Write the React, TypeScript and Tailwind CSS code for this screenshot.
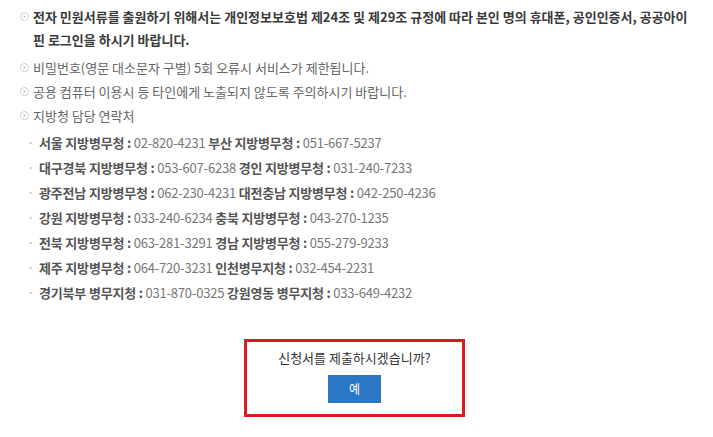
import React from 'react';

// 안내 문구 + 지방청 연락처 + 제출 확인 박스
const notices: { text: string; strong?: boolean }[] = [
  {
    text: '전자 민원서류를 출원하기 위해서는 개인정보보호법 제24조 및 제29조 규정에 따라 본인 명의 휴대폰, 공인인증서, 공공아이핀 로그인을 하시기 바랍니다.',
    strong: true,
  },
  { text: '비밀번호(영문 대소문자 구별) 5회 오류시 서비스가 제한됩니다.' },
  { text: '공용 컴퓨터 이용시 등 타인에게 노출되지 않도록 주의하시기 바랍니다.' },
];

const contacts: [string, string][][] = [
  [['서울 지방병무청', '02-820-4231'], ['부산 지방병무청', '051-667-5237']],
  [['대구경북 지방병무청', '053-607-6238'], ['경인 지방병무청', '031-240-7233']],
  [['광주전남 지방병무청', '062-230-4231'], ['대전충남 지방병무청', '042-250-4236']],
  [['강원 지방병무청', '033-240-6234'], ['충북 지방병무청', '043-270-1235']],
  [['전북 지방병무청', '063-281-3291'], ['경남 지방병무청', '055-279-9233']],
  [['제주 지방병무청', '064-720-3231'], ['인천병무지청', '032-454-2231']],
  [['경기북부 병무지청', '031-870-0325'], ['강원영동 병무지청', '033-649-4232']],
];

function CircleArrow() {
  return (
    <svg width="9" height="9" viewBox="0 0 9 9" className="mt-[7px] shrink-0" aria-hidden="true">
      <circle cx="4.5" cy="4.5" r="4" fill="none" stroke="#cfcfcf" strokeWidth="1" />
      <path d="M3.7 3 L5.5 4.5 L3.7 6 Z" fill="#a8a8a8" />
    </svg>
  );
}

export default function App() {
  return (
    <div
      className="h-[437px] w-[713px] overflow-hidden bg-white pt-[5px] text-[13px]"
      style={{ fontFamily: '"Noto Sans CJK KR", "Noto Sans", sans-serif' }}
    >
      <ul className="pl-[20px] pr-[20px]">
        {notices.map((n, i) => (
          <li key={i} className={`flex gap-[4px] leading-[23px] ${i === 1 ? 'mt-[5px]' : i > 1 ? 'mt-[1px]' : ''}`}>
            <CircleArrow />
            <span className={n.strong ? 'font-bold text-[#3a3a3a]' : 'text-[#666]'}>{n.text}</span>
          </li>
        ))}
        <li className="mt-[1px] flex gap-[4px] leading-[23px]">
          <CircleArrow />
          <div>
            <span className="text-[#666]">지방청 담당 연락처</span>
            <ul className="-ml-[6px] mt-[3px] tracking-[-0.2px]">
              {contacts.map((row, i) => (
                <li key={i} className="flex gap-[5px] leading-[25px]">
                  <span className="text-[#aaa]">·</span>
                  <span>
                    {row.map(([name, tel], j) => (
                      <React.Fragment key={j}>
                        {j > 0 && ' '}
                        <b className="font-bold text-[#555]">{name} :</b>{' '}
                        <span className="text-[#777]">{tel}</span>
                      </React.Fragment>
                    ))}
                  </span>
                </li>
              ))}
            </ul>
          </div>
        </li>
      </ul>

      <div className="ml-[244px] mt-[34px] flex w-[221px] flex-col items-center border-[3px] border-[#dd1a22] pb-[11px] pt-[6px]">
        <p className="text-[13px] leading-[20px] text-[#333]">신청서를 제출하시겠습니까?</p>
        <button className="mt-[7px] h-[28px] w-[53px] bg-[#2a77c6] text-[12px] text-white">예</button>
      </div>
    </div>
  );
}
